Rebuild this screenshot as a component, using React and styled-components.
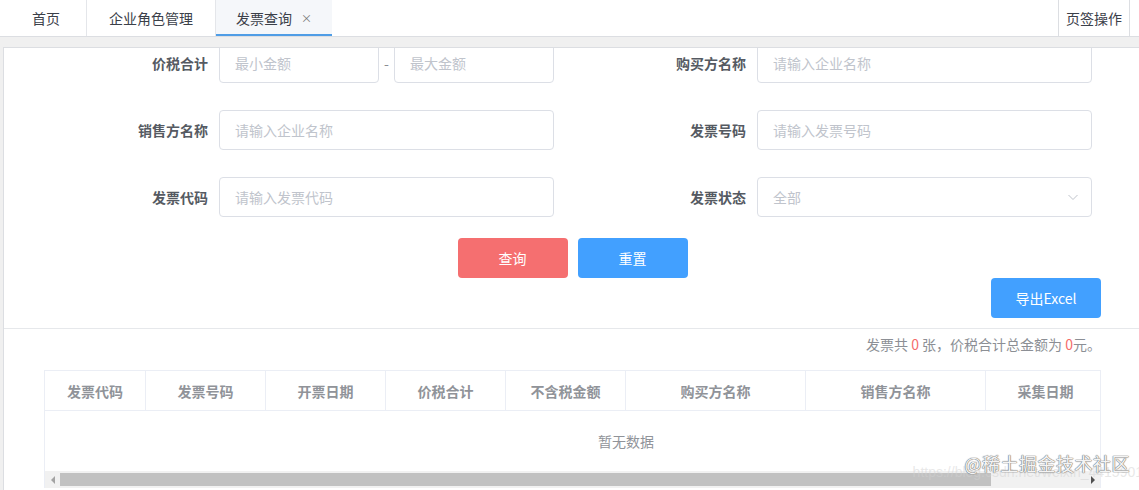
import React from "react";
import styled, { createGlobalStyle } from "styled-components";

const Global = createGlobalStyle`
  html, body { margin: 0; padding: 0; background: #fff; }
  body {
    font-family: "Noto Sans CJK SC", "Noto Sans", "Liberation Sans", sans-serif;
    font-size: 14px;
    overflow: hidden;
  }
  * { box-sizing: border-box; }
  input::placeholder { color: #c0c4cc; }
`;

const Page = styled.div`
  position: relative;
  width: 1139px;
  height: 490px;
  overflow: hidden;
  display: flex;
  flex-direction: column;
`;

const TabBar = styled.div`
  display: flex;
  height: 37px;
  border-bottom: 1px solid #dcdee2;
  background: #fff;
`;

const Tab = styled.div`
  width: ${(p) => p.$w}px;
  height: 36px;
  display: flex;
  align-items: center;
  justify-content: center;
  padding-left: ${(p) => p.$pl || 0}px;
  gap: 9px;
  color: #3b4049;
  font-size: 14px;
  border-right: ${(p) => (p.$active ? "none" : "1px solid #e4e6ea")};
  background: ${(p) => (p.$active ? "#f5f7fa" : "#fff")};
  box-shadow: ${(p) => (p.$active ? "inset 0 -2px 0 #4f9de6" : "none")};
`;

const Close = styled.span`
  font-size: 11px;
  color: #777;
  line-height: 1;
`;

const Spacer = styled.div`
  flex: 1;
`;

const TabAction = styled.div`
  width: 72px;
  height: 36px;
  display: flex;
  align-items: center;
  justify-content: center;
  border-left: 1px solid #dcdee2;
  border-right: 1px solid #dcdee2;
  margin-right: 9px;
  color: #3b4049;
`;

const Body = styled.div`
  flex: 1;
  background: #f0f0f0;
  padding: 10px 0 0 3px;
  display: flex;
`;

const Card = styled.div`
  flex: 1;
  background: #fff;
  border-top: 1px solid #dcdee2;
  border-left: 1px solid #dcdee2;
  overflow: hidden;
  display: flex;
  flex-direction: column;
`;

const Form = styled.div`
  margin-top: -5px;
  padding-left: 115px;
  display: grid;
  grid-template-columns: 100px 335px 203px 335px;
  row-gap: 27px;
`;

const Label = styled.label`
  height: 40px;
  display: flex;
  align-items: center;
  justify-content: flex-end;
  padding-right: 11px;
  font-weight: bold;
  color: #555a62;
  font-size: 14px;
`;

const Field = styled.div`
  display: flex;
  align-items: center;
  height: 40px;
`;

const Input = styled.input`
  width: ${(p) => (p.$w ? `${p.$w}px` : "100%")};
  height: 40px;
  border: 1px solid #dcdfe6;
  border-radius: 4px;
  padding: 0 15px;
  font-family: inherit;
  font-size: 14px;
  color: #606266;
  outline: none;
  background: #fff;
`;

const Dash = styled.span`
  width: 15px;
  text-align: center;
  color: #8a8d93;
`;

const Select = styled.div`
  width: 100%;
  height: 40px;
  border: 1px solid #dcdfe6;
  border-radius: 4px;
  padding: 0 12px 0 15px;
  display: flex;
  align-items: center;
  justify-content: space-between;
  color: #c0c4cc;
`;

const Buttons = styled.div`
  margin-top: 21px;
  display: flex;
  justify-content: center;
  gap: 10px;
  padding-left: 2px;
`;

const Button = styled.button`
  width: 110px;
  height: 40px;
  border: none;
  border-radius: 4px;
  color: #fff;
  font-family: inherit;
  font-size: 14px;
  background: ${(p) => (p.$danger ? "#f56f70" : "#42a0ff")};
  cursor: pointer;
`;

const ExportRow = styled.div`
  display: flex;
  justify-content: flex-end;
  padding-right: 38px;
  margin-bottom: 10px;
`;

const Divider = styled.div`
  height: 1px;
  background: #e6e8eb;
`;

const Summary = styled.div`
  margin-top: 5px;
  padding-right: 38px;
  text-align: right;
  line-height: 20px;
  color: #8c8f95;
`;

const Red = styled.span`
  color: #f56c6c;
`;

const TableWrap = styled.div`
  margin: 16px 38px 0 40px;
  border: 1px solid #ebeef5;
  border-bottom: none;
  overflow: hidden;
`;

const HeadRow = styled.div`
  display: flex;
  width: 1162px;
  height: 40px;
  border-bottom: 1px solid #ebeef5;
`;

const HeadCell = styled.div`
  width: ${(p) => p.$w}px;
  flex: none;
  display: flex;
  align-items: center;
  justify-content: center;
  border-right: 1px solid #ebeef5;
  font-weight: bold;
  color: #909399;
`;

const Empty = styled.div`
  width: 1162px;
  height: 60px;
  display: flex;
  align-items: center;
  justify-content: center;
  color: #909399;
`;

const ScrollBar = styled.div`
  height: 17px;
  background: #f1f1f1;
  display: flex;
  align-items: center;
`;

const Arrow = styled.div`
  width: 15px;
  height: 17px;
  display: flex;
  align-items: center;
  justify-content: center;
  &::before {
    content: "";
    width: 0;
    height: 0;
    border-top: 4px solid transparent;
    border-bottom: 4px solid transparent;
    ${(p) =>
      p.$right
        ? "border-left: 4px solid #505050;"
        : "border-right: 4px solid #a3a3a3;"}
  }
`;

const Track = styled.div`
  flex: 1;
  height: 17px;
  display: flex;
  align-items: center;
`;

const Thumb = styled.div`
  height: 13px;
  background: #c1c1c1;
`;

const Watermark = styled.div`
  position: absolute;
  right: 9px;
  bottom: 14px;
  font-size: 18px;
  color: #f4f4f4;
  letter-spacing: 0.5px;
  text-shadow: 0 0 1px #777, 0 0 1px #777, 0 0 1px #777;
  white-space: nowrap;
`;

const WatermarkUrl = styled.div`
  position: absolute;
  right: -4px;
  bottom: 10px;
  font-size: 14px;
  color: rgba(210, 210, 210, 0.5);
  white-space: nowrap;
  font-family: "Liberation Sans", sans-serif;
`;

const Chevron = () => (
  <svg width="12" height="12" viewBox="0 0 12 12">
    <path d="M1.5 4 L6 8.5 L10.5 4" fill="none" stroke="#c0c4cc" strokeWidth="1" />
  </svg>
);

const columns = [
  ["发票代码", 101],
  ["发票号码", 120],
  ["开票日期", 120],
  ["价税合计", 120],
  ["不含税金额", 120],
  ["购买方名称", 180],
  ["销售方名称", 180],
  ["采集日期", 120],
  ["", 101],
];

export default function App() {
  return (
    <Page>
      <Global />
      <TabBar>
        <Tab $w={87} $pl={6}>首页</Tab>
        <Tab $w={129}>企业角色管理</Tab>
        <Tab $w={116} $active>
          发票查询 <Close>×</Close>
        </Tab>
        <Spacer />
        <TabAction>页签操作</TabAction>
      </TabBar>
      <Body>
        <Card>
          <Form>
            <Label>价税合计</Label>
            <Field>
              <Input $w={160} placeholder="最小金额" />
              <Dash>-</Dash>
              <Input $w={160} placeholder="最大金额" />
            </Field>
            <Label>购买方名称</Label>
            <Field>
              <Input placeholder="请输入企业名称" />
            </Field>

            <Label>销售方名称</Label>
            <Field>
              <Input placeholder="请输入企业名称" />
            </Field>
            <Label>发票号码</Label>
            <Field>
              <Input placeholder="请输入发票号码" />
            </Field>

            <Label>发票代码</Label>
            <Field>
              <Input placeholder="请输入发票代码" />
            </Field>
            <Label>发票状态</Label>
            <Field>
              <Select>
                <span>全部</span>
                <Chevron />
              </Select>
            </Field>
          </Form>
          <Buttons>
            <Button $danger>查询</Button>
            <Button>重置</Button>
          </Buttons>
          <ExportRow>
            <Button>导出Excel</Button>
          </ExportRow>
          <Divider />
          <Summary>
            发票共 <Red>0</Red> 张，价税合计总金额为 <Red>0</Red>元。
          </Summary>
          <TableWrap>
            <HeadRow>
              {columns.map(([t, w], i) => (
                <HeadCell key={i} $w={w}>
                  {t}
                </HeadCell>
              ))}
            </HeadRow>
            <Empty>暂无数据</Empty>
            <ScrollBar>
              <Arrow />
              <Track>
                <Thumb style={{ width: `${(1056 / 1162) * 100}%` }} />
              </Track>
              <Arrow $right />
            </ScrollBar>
          </TableWrap>
        </Card>
      </Body>
      <WatermarkUrl>https://blog.csdn.net/weixin_4415901</WatermarkUrl>
      <Watermark>@稀土掘金技术社区</Watermark>
    </Page>
  );
}
